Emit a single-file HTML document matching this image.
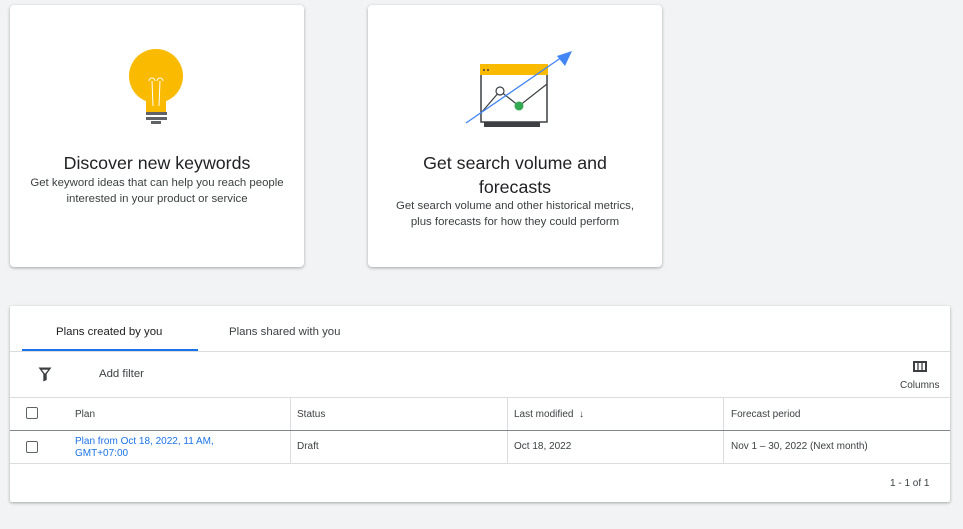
<!DOCTYPE html>
<html><head><style>
body{margin:0;width:963px;height:529px;background:#f1f3f4;font-family:"Liberation Sans",Arial,sans-serif;position:relative;overflow:hidden;color:#202124}
.card{position:absolute;background:#fff;border-radius:4px;box-shadow:0 1px 3px rgba(60,64,67,.3),0 1px 2px rgba(60,64,67,.15)}
.t{position:absolute;white-space:nowrap}
.h{font-size:17.8px;color:#202124;text-align:center;left:0;right:0}
.s{font-size:11.4px;color:#3c4043;text-align:center;left:0;right:0;line-height:16px}
.sm{font-size:10px;color:#3c4043}
.cb{position:absolute;width:10px;height:10px;border:1.5px solid #5f6368;border-radius:2px}
.vl{position:absolute;width:1px;background:#dadce0}
.hl{position:absolute;height:1px;background:#dadce0;left:0;right:0}
</style></head><body>
<div class="card" style="left:10px;top:5px;width:294px;height:262px">
<svg style="position:absolute;left:115px;top:43px" width="60" height="80">
<circle cx="31" cy="28" r="27" fill="#f9ba00"/>
<rect x="21" y="40" width="20" height="24" fill="#f9ba00"/>
<path d="M27 33 L28 58 M35 33 L34 58 M24 33 a3 3 0 1 1 6 0 M32 33 a3 3 0 1 1 6 0" stroke="#fff" stroke-width="1" fill="none"/>
<rect x="21" y="64" width="21" height="3" fill="#5f6368"/><rect x="21" y="69" width="21" height="3" fill="#5f6368"/><rect x="26" y="73" width="10" height="3" fill="#5f6368"/>
</svg>
<div class="t h" style="top:148px">Discover new keywords</div>
<div class="t s" style="top:170px">Get keyword ideas that can help you reach people<br>interested in your product or service</div>
</div>
<div class="card" style="left:368px;top:5px;width:294px;height:262px">
<svg style="position:absolute;left:95px;top:45px" width="120" height="80">
<rect x="18" y="15" width="66" height="57" fill="#fff" stroke="#3c4043" stroke-width="1.5"/>
<rect x="17" y="14" width="68" height="11" fill="#f9ba00"/>
<circle cx="21" cy="20" r="1" fill="#3c4043"/><circle cx="25" cy="20" r="1" fill="#3c4043"/>
<rect x="21" y="72" width="56" height="5" fill="#3c4043"/>
<path d="M18 63 L37 41 L56 56 L84 34" stroke="#3c4043" stroke-width="1.2" fill="none"/>
<path d="M3 73 L102 5" stroke="#4285f4" stroke-width="1.3"/>
<path d="M109 1 L94 6 L102 16 Z" fill="#4285f4"/>
<circle cx="37" cy="41" r="4" fill="#fff" stroke="#3c4043" stroke-width="1.2"/>
<circle cx="56" cy="56" r="4.5" fill="#34a853"/>
</svg>
<div class="t h" style="top:148px">Get search volume and<br><span style="line-height:26px">forecasts</span></div>
<div class="t s" style="top:193px">Get search volume and other historical metrics,<br>plus forecasts for how they could perform</div>
</div>
<div class="card" style="left:10px;top:306px;width:940px;height:196px;border-radius:2px">
<div class="t" style="left:46px;top:20px;font-size:11.4px;color:#202124">Plans created by you</div>
<div class="t" style="left:219px;top:20px;font-size:11.4px;color:#3c4043">Plans shared with you</div>
<div style="position:absolute;left:12px;top:43px;width:176px;height:2px;background:#1a73e8"></div>
<div class="hl" style="top:45px"></div>
<svg style="position:absolute;left:28px;top:61px" width="14" height="15"><path d="M0.5 0.5 H13.5 L8.7 7 V13 L5.3 14.5 V7 Z" fill="#3c4043"/><path d="M3.8 2.8 H10.2 L7 6.8Z" fill="#fff"/></svg>
<div class="t" style="left:89px;top:62px;font-size:11.4px;color:#3c4043">Add filter</div>
<svg style="position:absolute;left:903px;top:55px" width="14" height="11"><rect x="1" y="1" width="12" height="9" fill="none" stroke="#3c4043" stroke-width="2"/><path d="M5 1V10M9 1V10" stroke="#3c4043" stroke-width="1.3"/></svg>
<div class="t sm" style="left:890px;top:74px">Columns</div>
<div class="hl" style="top:91px"></div>
<div class="cb" style="left:16px;top:101px"></div>
<div class="t sm" style="left:65px;top:103px">Plan</div>
<div class="t sm" style="left:287px;top:103px">Status</div>
<div class="t sm" style="left:504px;top:103px">Last modified&nbsp;&nbsp;↓</div>
<div class="t sm" style="left:721px;top:103px">Forecast period</div>
<div class="vl" style="left:280px;top:91px;height:66px"></div>
<div class="vl" style="left:497px;top:91px;height:66px"></div>
<div class="vl" style="left:713px;top:91px;height:66px"></div>
<div class="hl" style="top:124px;background:#80868b"></div>
<div class="cb" style="left:16px;top:135px"></div>
<div class="t" style="left:65px;top:130px;font-size:10px;color:#1a73e8;line-height:12px">Plan from Oct 18, 2022, 11 AM,<br>GMT+07:00</div>
<div class="t sm" style="left:287px;top:135px">Draft</div>
<div class="t sm" style="left:504px;top:135px">Oct 18, 2022</div>
<div class="t sm" style="left:721px;top:135px">Nov 1 – 30, 2022 (Next month)</div>
<div class="hl" style="top:157px"></div>
<div class="t sm" style="left:880px;top:172px">1 - 1 of 1</div>
</div>
</body></html>
